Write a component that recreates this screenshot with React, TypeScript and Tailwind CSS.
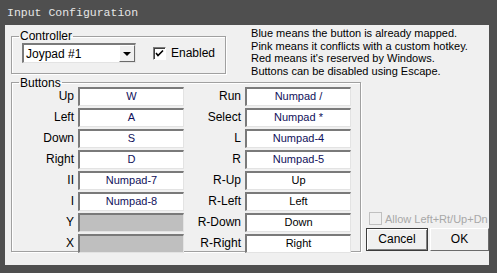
import React from "react"

const font = { fontFamily: '"Liberation Sans", Arial, sans-serif' }

const left = [
  { label: "Up", value: "W" },
  { label: "Left", value: "A" },
  { label: "Down", value: "S" },
  { label: "Right", value: "D" },
  { label: "II", value: "Numpad-7" },
  { label: "I", value: "Numpad-8" },
  { label: "Y", value: "", disabled: true },
  { label: "X", value: "", disabled: true },
]

const right = [
  { label: "Run", value: "Numpad /", mapped: true },
  { label: "Select", value: "Numpad *", mapped: true },
  { label: "L", value: "Numpad-4", mapped: true },
  { label: "R", value: "Numpad-5", mapped: true },
  { label: "R-Up", value: "Up" },
  { label: "R-Left", value: "Left" },
  { label: "R-Down", value: "Down" },
  { label: "R-Right", value: "Right" },
]

function Field({ value, disabled, dark }: { value: string; disabled?: boolean; dark?: boolean }) {
  return (
    <div
      className={`w-[106px] h-[19px] border-t-2 border-l-2 border-b border-r border-t-[#7a7a7a] border-l-[#7a7a7a] border-b-[#e3e3e3] border-r-[#e3e3e3] flex items-center justify-center text-[11px] leading-none ${
        disabled ? "bg-[#bfbfbf]" : "bg-white"
      } ${dark ? "text-black" : "text-[#10105a]"}`}
    >
      {value}
    </div>
  )
}

export default function App() {
  return (
    <div className="w-[497px] h-[273px] bg-[#4f4f4f] flex flex-col" style={font}>
      <div className="h-[25px] flex items-center pl-[7px] text-[#e6e6e6] text-[11.5px]" style={{ fontFamily: '"Liberation Mono", "DejaVu Sans Mono", monospace' }}>
        Input Configuration
      </div>
      <div className="flex-1 ml-[5px] mr-[8px] mb-[8px] bg-[#f0f0f0] text-[11px] text-black">
        <div className="flex">
          <fieldset className="ml-[6px] mt-[5px] w-[212px] h-[44px] border border-[#a0a0a0] shadow-[inset_1px_1px_0_#fff,1px_1px_0_#fff] px-[10px] pb-0">
            <legend className="px-[1px] ml-[-3px] leading-[12px] text-[12px]">Controller</legend>
            <div className="flex items-center mt-[1px] text-[12px]">
              <div className="w-[114px] h-[20px] border-t-2 border-l-2 border-b border-r border-t-[#7a7a7a] border-l-[#7a7a7a] border-b-[#e3e3e3] border-r-[#e3e3e3] bg-white flex items-center">
                <span className="flex-1 pl-[2px] leading-none">Joypad #1</span>
                <div className="w-[16px] h-full bg-[#f0f0f0] border-t border-l border-[#ffffff] border-b border-r border-b-[#6b6b6b] border-r-[#6b6b6b] flex items-center justify-center">
                  <div className="w-0 h-0 border-l-[4px] border-r-[4px] border-t-[4px] border-l-transparent border-r-transparent border-t-black" />
                </div>
              </div>
              <div className="ml-[17px] w-[13px] h-[13px] bg-white border-t border-l border-t-[#7a7a7a] border-l-[#7a7a7a] border-b border-r border-b-[#fff] border-r-[#fff] shadow-[inset_1px_1px_0_#404040] flex items-center justify-center">
                <svg width="9" height="9" viewBox="0 0 9 9">
                  <path d="M1 4 L3 6.5 L8 1.5" stroke="#000" strokeWidth="1.6" fill="none" />
                </svg>
              </div>
              <span className="ml-[5px]">Enabled</span>
            </div>
          </fieldset>
          <div className="ml-[25px] mt-[2px] leading-[12.7px]">
            <div>Blue means the button is already mapped.</div>
            <div>Pink means it conflicts with a custom hotkey.</div>
            <div>Red means it's reserved by Windows.</div>
            <div>Buttons can be disabled using Escape.</div>
          </div>
        </div>
        <div className="flex">
          <fieldset className="ml-[6px] mt-[-1px] w-[351px] h-[175px] border border-[#a0a0a0] shadow-[inset_1px_1px_0_#fff,1px_1px_0_#fff] p-0">
            <legend className="ml-[7px] px-[1px] leading-[12px] text-[12px]">Buttons</legend>
            <div className="flex mt-[-2px] text-[12px]">
              <div className="flex flex-col gap-[2px] ml-[22px]">
                {left.map((r) => (
                  <div key={r.label} className="flex items-center">
                    <span className="w-[44px] text-right pr-[4px]">{r.label}</span>
                    <Field value={r.value} disabled={r.disabled} />
                  </div>
                ))}
              </div>
              <div className="flex flex-col gap-[2px] ml-[4px]">
                {right.map((r) => (
                  <div key={r.label} className="flex items-center">
                    <span className="w-[57px] text-right pr-[4px]">{r.label}</span>
                    <Field value={r.value} dark={!r.mapped} />
                  </div>
                ))}
              </div>
            </div>
          </fieldset>
          <div className="flex flex-col justify-end ml-[5px] mb-[1px]">
            <div className="flex items-center h-[14px] text-[#a8a8a8] mb-[2px] ml-[3px] whitespace-nowrap">
              <div className="w-[13px] h-[13px] bg-[#f0f0f0] border border-[#c0c0c0]" />
              <span className="ml-[3px]">Allow Left+Rt/Up+Dn</span>
            </div>
            <div className="flex gap-[2px] text-[12px]">
              <div className="w-[62px] h-[23px] border border-[#3c3c3c] bg-[#f0f0f0] flex items-center justify-center shadow-[inset_1px_1px_0_#fff,inset_-1px_-1px_0_#808080]">
                Cancel
              </div>
              <div className="w-[59px] h-[23px] border-t border-l border-t-white border-l-white border-b border-r border-b-[#6b6b6b] border-r-[#6b6b6b] bg-[#f0f0f0] flex items-center justify-center">
                OK
              </div>
            </div>
          </div>
        </div>
      </div>
    </div>
  )
}
